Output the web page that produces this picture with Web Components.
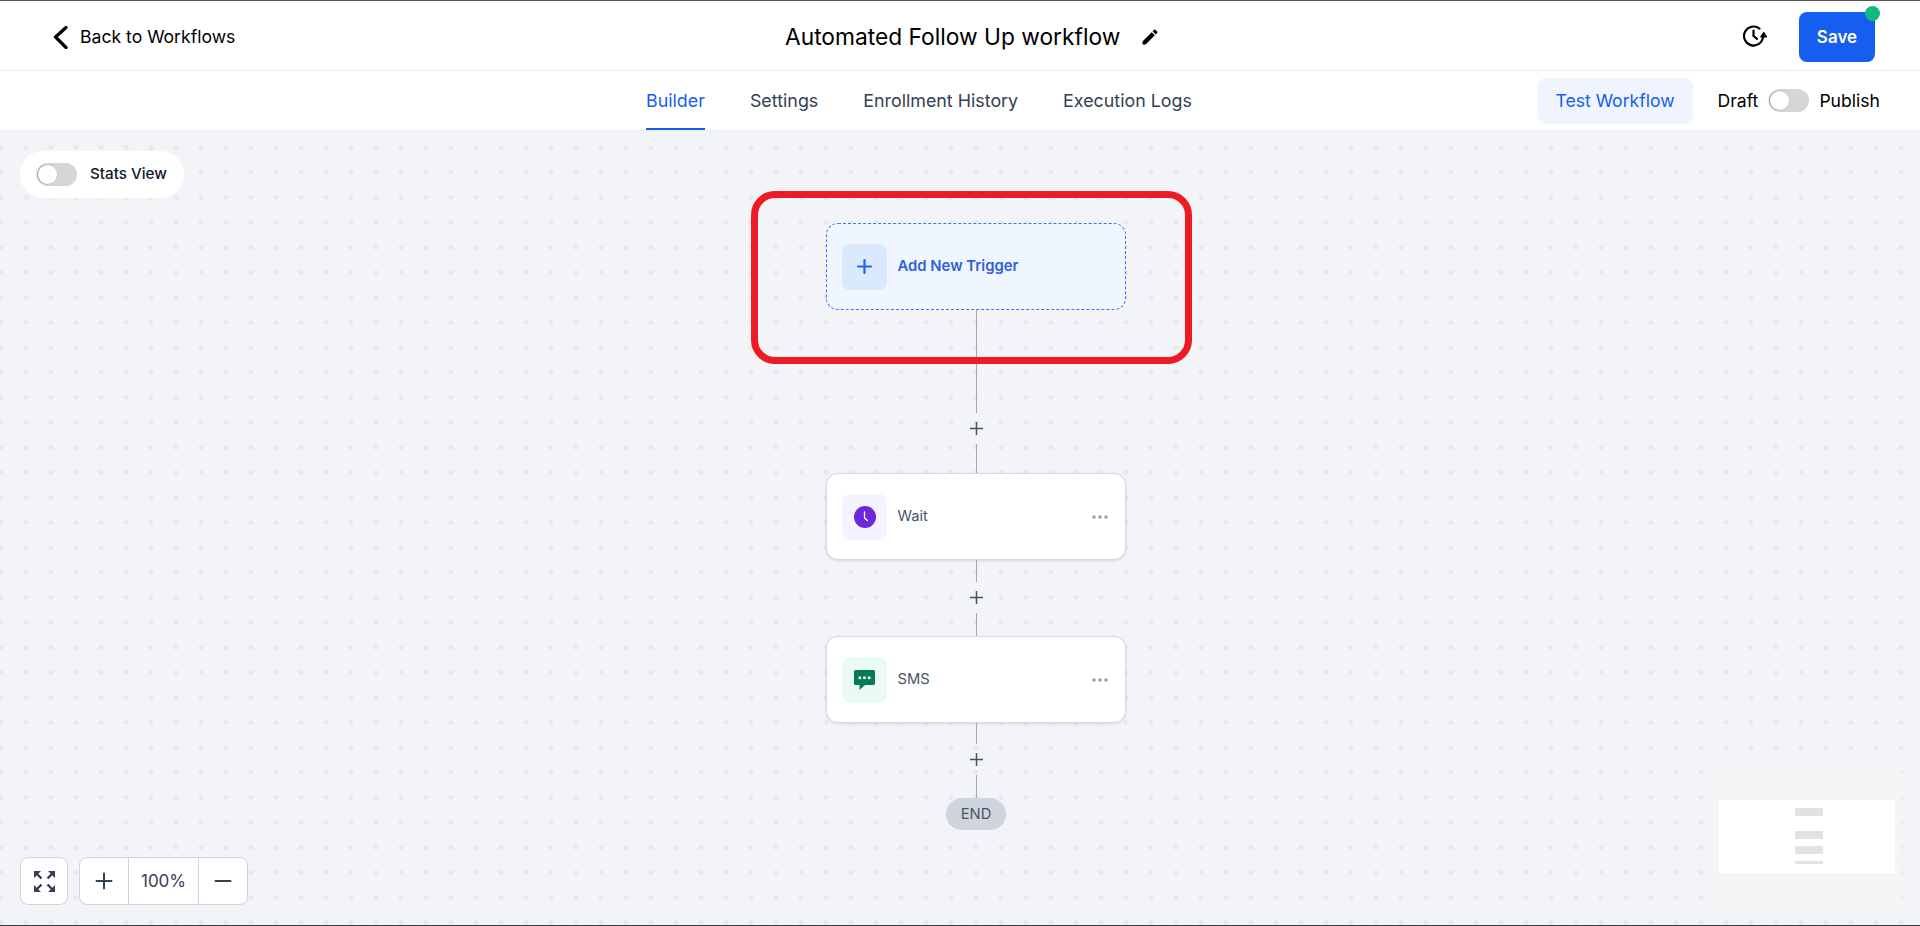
<!DOCTYPE html>
<html lang="en">
<head>
<meta charset="utf-8">
<title>Automated Follow Up workflow</title>
<style>
  html, body { margin: 0; height: 100%; }
  body { font-family: Inter, "Liberation Sans", sans-serif; overflow: hidden; }
  wf-app { height: 926px; }
</style>
</head>
<body>
<wf-app>
  <wf-header title-text="Automated Follow Up workflow"></wf-header>
  <wf-tabs></wf-tabs>
  <wf-canvas>
    <wf-node kind="trigger" label="Add New Trigger"></wf-node>
    <wf-link len="103" after="29"></wf-link>
    <wf-node kind="wait" label="Wait"></wf-node>
    <wf-link len="22" after="23"></wf-link>
    <wf-node kind="sms" label="SMS"></wf-node>
    <wf-link len="21" after="23"></wf-link>
    <wf-end></wf-end>
  </wf-canvas>
</wf-app>

<script>
// toggle apagado, se usa en la cabecera y en el lienzo
class WfToggle extends HTMLElement {
  constructor() {
    super();
    this.attachShadow({ mode: "open" }).innerHTML = `
      <style>
        :host { display: block; width: 40px; height: 23px; border-radius: 12px; background: #d6d6d6; position: relative; flex: none; }
        i { position: absolute; left: 1px; top: 2px; width: 19px; height: 19px; border-radius: 50%; background: #fff; box-shadow: -1px 0 2px rgba(0,0,0,.35); }
      </style><i></i>`;
  }
}

class WfHeader extends HTMLElement {
  constructor() {
    super();
    this.attachShadow({ mode: "open" });
  }
  connectedCallback() {
    this.shadowRoot.innerHTML = `
      <style>
        :host { display: grid; grid-template-columns: 785px auto 1fr; align-items: center; height: 69px; background: #fff; border-top: 1px solid #555; border-bottom: 1px solid #eaecf0; color: #000; }
        .back { display: flex; align-items: center; gap: 12px; padding-left: 52px; margin-top: 2px; font-size: 17.600px; font-weight: 400; }
        .title { display: flex; align-items: center; gap: 20px; margin-top: 2px; font-size: 22.750px; font-weight: 400; }
        .right { display: flex; justify-content: flex-end; align-items: center; gap: 32px; padding-right: 45px; }
        .save { position: relative; width: 76px; height: 50px; margin-top: 2px; box-sizing: border-box; border-radius: 8px; background: #155eef; color: #fff; font-size: 17px; font-weight: 600; display: flex; align-items: center; justify-content: center; }
        .save::after { content: ""; position: absolute; right: -5px; top: -6px; width: 15px; height: 15px; border-radius: 50%; background: #16b97c; }
        svg { display: block; }
      </style>
      <div class="back">
        <svg width="16" height="24" viewBox="0 0 16 24" fill="none" stroke="#000" stroke-width="3.200" stroke-linecap="round" stroke-linejoin="round"><path d="M14 2.500 3.500 12 14 22.500"/></svg>
        <span>Back to Workflows</span>
      </div>
      <div class="title">
        <span>${this.getAttribute("title-text")}</span>
        <svg width="20" height="20" viewBox="0 0 24 24" fill="#000"><path d="M3 17.250V21h3.750L17.810 9.940l-3.750-3.750L3 17.250zM20.710 7.040a1 1 0 0 0 0-1.410l-2.340-2.340a1 1 0 0 0-1.410 0l-1.830 1.830 3.750 3.750 1.830-1.830z"/></svg>
      </div>
      <div class="right">
        <svg width="24" height="24" viewBox="0 0 24 24" fill="none" stroke="#000" stroke-width="2.200" stroke-linecap="round" stroke-linejoin="round"><path d="M20 13A9.500 9.500 0 1 1 16.500 4.600"/><path d="M10.500 6.500V12l3.500 2.800"/><path d="M20.500 8.500l-3 4.500h6z" fill="#000" stroke-width="1"/></svg>
        <div class="save">Save</div>
      </div>`;
  }
}

class WfTabs extends HTMLElement {
  constructor() {
    super();
    this.attachShadow({ mode: "open" }).innerHTML = `
      <style>
        :host { display: flex; align-items: stretch; height: 59px; padding: 0 40px 0 646px; background: #fff; border-bottom: 1px solid #eaecf0; font-size: 17.600px; font-weight: 400; color: #344054; }
        nav { display: flex; gap: 45px; font-size: 17.850px; }
        a { display: flex; align-items: center; }
        a.on { color: #155eef; box-shadow: inset 0 -2px 0 #155eef; }
        .right { margin-left: auto; display: flex; align-items: center; color: #000; }
        .test { display: flex; align-items: center; justify-content: center; width: 155px; height: 45px; margin-right: 25px; border-radius: 8px; background: #eff4ff; color: #155eef; box-shadow: 0 1px 2px rgba(16,24,40,.05); }
        .right wf-toggle { margin: 0 10px 0 11px; }
      </style>
      <nav><a class="on">Builder</a><a>Settings</a><a>Enrollment History</a><a>Execution Logs</a></nav>
      <div class="right">
        <div class="test">Test Workflow</div>
        <span>Draft</span><wf-toggle></wf-toggle><span>Publish</span>
      </div>`;
  }
}

const NODE_ICONS = {
  trigger: `<svg width="17" height="17" viewBox="0 0 17 17" fill="none" stroke="#2563eb" stroke-width="2.200" stroke-linecap="round"><path d="M8.500 2v13M2 8.500h13"/></svg>`,
  wait: `<svg width="22" height="22" viewBox="0 0 22 22"><circle cx="11" cy="11" r="11" fill="#6d28d9"/><path d="M10.500 6v6l3 2.500" fill="none" stroke="#fff" stroke-width="1.300" stroke-linecap="round" stroke-linejoin="round"/></svg>`,
  sms: `<svg width="21" height="20" viewBox="0 0 21 20"><path d="M1.500 0h18A1.500 1.500 0 0 1 21 1.500v12a1.500 1.500 0 0 1-1.500 1.500H11l-5.500 5v-5h-4A1.500 1.500 0 0 1 0 13.500v-12A1.500 1.500 0 0 1 1.500 0z" fill="#067a57"/><g fill="#fff"><rect x="4.500" y="6.500" width="2.600" height="2.600"/><rect x="9.200" y="6.500" width="2.600" height="2.600"/><rect x="13.900" y="6.500" width="2.600" height="2.600"/></g></svg>`
};

class WfNode extends HTMLElement {
  constructor() {
    super();
    this.attachShadow({ mode: "open" });
  }
  connectedCallback() {
    const kind = this.getAttribute("kind");
    const dots = kind === "trigger" ? "" : `<svg class="more" width="16" height="4" viewBox="0 0 16 4" fill="#98a2b3"><circle cx="2" cy="2" r="1.800"/><circle cx="8" cy="2" r="1.800"/><circle cx="14" cy="2" r="1.800"/></svg>`;
    this.shadowRoot.innerHTML = `
      <style>
        :host { display: flex; align-items: center; box-sizing: border-box; width: 300px; height: 87px; padding: 0 17px 0 15px; background: #fff; border: 1px solid #d7dae0; border-radius: 12px; box-shadow: 0 1px 3px rgba(16,24,40,.12); font-size: 14.700px; color: #475467; flex: none; }
        :host([kind="trigger"]) { background: #eff6ff; border: 1px dashed #3b76ee; box-shadow: none; color: #2f5fdf; font-weight: 600; font-size: 14.850px; }
        .ico { display: flex; align-items: center; justify-content: center; width: 45px; height: 46px; border-radius: 8px; margin-right: 10.500px; }
        :host([kind="trigger"]) .ico { background: #dbe9fe; }
        :host([kind="wait"]) .ico { background: #f4f3ff; }
        :host([kind="sms"]) .ico { background: #e9fbf4; }
        span { margin-bottom: 1px; }
        .more { margin-left: auto; }
      </style>
      <div class="ico">${NODE_ICONS[kind]}</div>
      <span>${this.getAttribute("label")}</span>${dots}`;
  }
}

// tramo: línea, signo + y línea hasta el siguiente nodo
class WfLink extends HTMLElement {
  constructor() {
    super();
    this.attachShadow({ mode: "open" });
  }
  connectedCallback() {
    this.shadowRoot.innerHTML = `
      <style>
        :host { display: flex; flex-direction: column; align-items: center; flex: none; }
        i { display: block; width: 1px; background: #a5a8ae; }
        svg { display: block; margin: 9px 0; }
      </style>
      <i style="height:${this.getAttribute("len")}px"></i>
      <svg width="13" height="13" viewBox="0 0 13 13" fill="none" stroke="#475467" stroke-width="1.500"><path d="M6.500 0v13M0 6.500h13"/></svg>
      <i style="height:${this.getAttribute("after")}px"></i>`;
  }
}

class WfEnd extends HTMLElement {
  constructor() {
    super();
    this.attachShadow({ mode: "open" }).innerHTML = `
      <style>
        :host { display: flex; align-items: center; justify-content: center; width: 60px; height: 32px; border-radius: 16px; background: #d0d5dd; color: #475467; font-size: 14.700px; flex: none; }
      </style>END`;
  }
}

class WfCanvas extends HTMLElement {
  constructor() {
    super();
    this.attachShadow({ mode: "open" }).innerHTML = `
      <style>
        :host { display: flex; flex-direction: column; align-items: center; position: relative; box-sizing: border-box; height: 795px; padding: 92px 0 0 32px; background-color: #f2f4f8; background-image: radial-gradient(circle, #e6e8ea 2px, transparent 2.500px); background-size: 25px 25px; background-position: 13.500px 4px; border-bottom: 1px solid #3a4048; overflow: hidden; }
        .stats { position: absolute; left: 20px; top: 20px; height: 47px; width: 164px; box-sizing: border-box; padding-left: 17px; gap: 13px; display: flex; align-items: center; background: #fff; border-radius: 24px; font-size: 15.200px; font-weight: 500; color: #101828; }
        .stats span { margin-bottom: 2px; }
        .mark { position: absolute; left: 751px; top: 60px; width: 441px; height: 173px; box-sizing: border-box; border: 7px solid #ed1c24; border-radius: 24px; }
        .controls { position: absolute; left: 20px; top: 726px; display: flex; gap: 11px; }
        .box { display: flex; height: 48px; box-sizing: border-box; background: #fff; border: 1px solid #d0d5dd; border-radius: 8px; color: #344054; }
        .box > div { display: flex; align-items: center; justify-content: center; box-sizing: border-box; font-size: 17px; }
        .box > div + div { border-left: 1px solid #d0d5dd; }
        .map { position: absolute; left: 1713px; top: 635px; width: 188px; height: 141px; box-sizing: border-box; padding-top: 34px; background: #f5f5f5; }
        .map-in { display: flex; flex-direction: column; align-items: center; height: 73px; margin: 0 6px; padding: 8px 0 0 4px; box-sizing: border-box; background: #fff; overflow: hidden; }
        .map-in b { display: block; width: 28px; height: 8px; background: #e2e2e2; margin-bottom: 7px; flex: none; }
        .map-in b:first-child { margin-bottom: 15px; }
        .map-in b:last-child { height: 3px; }
        svg { display: block; }
      </style>
      <div class="stats"><wf-toggle></wf-toggle><span>Stats View</span></div>
      <slot></slot>
      <div class="mark"></div>
      <div class="controls">
        <div class="box"><div style="width:46px">
          <svg width="21" height="21" viewBox="0 0 21 21" fill="#344054" stroke="#344054" stroke-width="0"><path d="M0 0h7L0 7zM21 0v7L14 0zM21 21h-7L21 14zM0 21v-7L7 21z"/><path d="M3 3l4.500 4.500M18 3l-4.500 4.500M18 18l-4.500-4.500M3 18l4.500-4.500" fill="none" stroke-width="2.400"/></svg>
        </div></div>
        <div class="box">
          <div style="width:48px"><svg width="18" height="18" viewBox="0 0 18 18" fill="none" stroke="#344054" stroke-width="2" stroke-linecap="round"><path d="M9 1.500v15M1.500 9h15"/></svg></div>
          <div style="width:70px">100%</div>
          <div style="width:49px"><svg width="18" height="18" viewBox="0 0 18 18" fill="none" stroke="#344054" stroke-width="2" stroke-linecap="round"><path d="M1.500 9h15"/></svg></div>
        </div>
      </div>
      <div class="map"><div class="map-in"><b></b><b></b><b></b><b></b></div></div>`;
  }
}

class WfApp extends HTMLElement {
  constructor() {
    super();
    this.attachShadow({ mode: "open" }).innerHTML = `
      <style>:host { display: block; }</style><slot></slot>`;
  }
}

customElements.define("wf-toggle", WfToggle);
customElements.define("wf-header", WfHeader);
customElements.define("wf-tabs", WfTabs);
customElements.define("wf-node", WfNode);
customElements.define("wf-link", WfLink);
customElements.define("wf-end", WfEnd);
customElements.define("wf-canvas", WfCanvas);
customElements.define("wf-app", WfApp);
</script>
</body>
</html>
